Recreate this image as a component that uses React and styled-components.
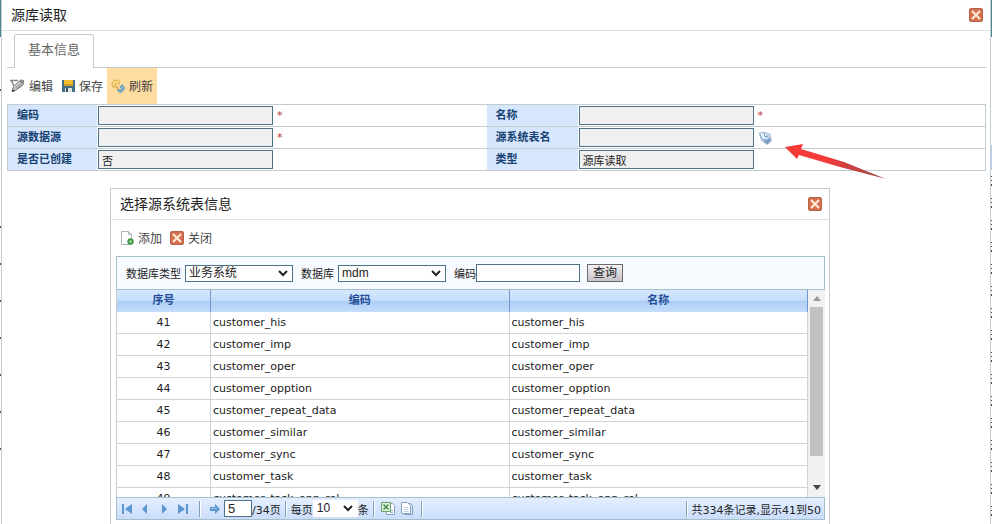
import React from 'react'
import styled, { createGlobalStyle } from 'styled-components'

const FONT = "'DejaVu Sans', 'Noto Sans CJK SC', sans-serif"
const CONTROL_FONT = "'Liberation Sans', 'Noto Sans CJK SC', sans-serif"
const BORDER = '#c3cdd1'
const PANEL_BORDER = '#a3bfca'
const INPUT_BORDER = '#4d7386'

const GlobalStyle = createGlobalStyle`
  * {
    box-sizing: border-box;
  }

  body {
    margin: 0;
    overflow: hidden;
    background: #fff;
    color: #222;
    font-family: ${FONT};
    font-size: 11px;
  }

  button, input, select {
    margin: 0;
    border-radius: 0;
    color: inherit;
    font-family: ${CONTROL_FONT};
  }
`

const Page = styled('div')`
  display: flex;
  min-height: 100vh;
  background: #fff;
`

const LeftEdge = styled('div')`
  width: 1px;
  background:
    linear-gradient(#4c8294, #4c8294) 0 0 / 1px 37px no-repeat,
    linear-gradient(#555, #555) 0 89px / 1px 2px no-repeat,
    linear-gradient(#fff, #fff) 0 0 / 1px 220px no-repeat,
    linear-gradient(#fff, #fff) 0 460px / 1px 100% no-repeat,
    repeating-linear-gradient(#fff 0, #fff 4px, #555 4px, #555 6px, #fff 6px, #fff 37px);
`

const RightEdge = styled('div')`
  width: 1px;
  background:
    linear-gradient(#4c8294, #4c8294) 0 0 / 1px 37px no-repeat,
    linear-gradient(#fff, #fff) 0 37px / 1px 108px no-repeat,
    linear-gradient(#b5cdf0, #b5cdf0) 0 145px / 1px 25px no-repeat,
    repeating-linear-gradient(#444 0, #444 1px, #fff 1px, #fff 4px, #444 4px, #444 5px, #fff 5px, #fff 8px, #444 8px, #444 10px, #fff 10px, #fff 22px);
`

const Window = styled('main')`
  display: flex;
  flex: 1;
  flex-direction: column;
  min-width: 0;
  border: 0 solid ${BORDER};
  border-width: 0 1px;
`

const TitleBar = styled('header')`
  display: flex;
  align-items: center;
  justify-content: space-between;
  height: 31px;
  padding: 0 7px 0 9px;
  border-bottom: 1px solid #dbe3e6;
`

const Title = styled('h1')`
  margin: 0;
  font-size: 14px;
  font-weight: 400;
  line-height: 20px;
`

const IconButton = styled('button')`
  display: flex;
  padding: 0;
  border: 0;
  background: none;
`

const Tabs = styled('div')`
  display: flex;
  height: 37px;
  margin: 0 4px 0 5px;
  padding: 3px 7px 0;
  border-bottom: 1px solid ${BORDER};
`

const Tab = styled('button')`
  height: 34px;
  padding: 0 13px 6px;
  border: 1px solid ${BORDER};
  border-bottom: 0;
  border-radius: 3px 3px 0 0;
  background: #fff;
  color: #666;
  font-size: 13px;
`

const Toolbar = styled('div')`
  display: flex;
  height: 36px;
  padding-left: ${({ $inset }) => $inset}px;
`

const ToolButton = styled('button')`
  display: flex;
  align-items: center;
  gap: 4px;
  padding: 0 4px 1px;
  border: 0;
  background: ${({ $active }) => ($active ? '#ffdc9f' : 'none')};
  color: #444;
  font-size: 12px;
`

const Form = styled('form')`
  display: grid;
  grid-template-columns: 89px 390fr 91px 408fr;
  margin: 0 4px 0 5px;
  border: 1px solid ${BORDER};
  border-bottom: 0;
`

const FieldLabel = styled('label')`
  height: 22px;
  padding-left: 9px;
  border-bottom: 1px solid ${BORDER};
  background: #d6e6fd;
  color: #164272;
  font-weight: 700;
  line-height: 22px;
`

const FieldCell = styled('div')`
  position: relative;
  display: flex;
  align-items: center;
  gap: 4px;
  height: 22px;
  padding-left: 1px;
  border-bottom: 1px solid ${BORDER};
`

const FieldInput = styled('input')`
  width: 175px;
  height: 19px;
  padding: 0 3px;
  border: 1px solid ${INPUT_BORDER};
  background: #f0f0f0;
  font-size: 11px;
`

const Required = styled('span')`
  color: #b8373c;
`

const Arrow = styled('svg')`
  position: absolute;
  top: 15px;
  left: 206px;
  z-index: 1;
`

const Dialog = styled('section')`
  flex: 1;
  width: 720px;
  margin: 17px 0 0 108px;
  border: 1px solid ${BORDER};
  border-bottom: 0;
`

const DialogBody = styled('div')`
  padding: 0 4px 4px 5px;
`

const Filters = styled('form')`
  display: flex;
  align-items: center;
  height: 34px;
  padding-left: 9px;
  border: 1px solid ${PANEL_BORDER};
  background: #f7fbff;
`

const Filter = styled('label')`
  display: flex;
  align-items: center;
  gap: ${({ $gap }) => $gap}px;
  margin-right: ${({ $after }) => $after}px;
`

const SelectBox = styled('span')`
  display: flex;
  align-items: center;
  width: ${({ $width }) => $width}px;
  height: 17px;
  border: 1px solid ${({ $plain }) => ($plain ? '#fff' : INPUT_BORDER)};
  background: #fff;

  & > select {
    flex: 1;
    min-width: 0;
    height: 15px;
    padding: 0 3px;
    appearance: none;
    border: 0;
    background: none;
    font-size: 12px;
    line-height: 15px;
  }

  & > svg {
    margin-right: 4px;
  }
`

const FilterInput = styled('input')`
  width: 104px;
  height: 18px;
  border: 1px solid ${INPUT_BORDER};
  background: #fff;
`

const QueryButton = styled('button')`
  width: 36px;
  height: 18px;
  padding: 0;
  border: 1px solid #6b6b6b;
  background: linear-gradient(#f4f2f4, #c6c2c8);
  color: #222;
  font-size: 12px;
  line-height: 16px;
`

const GridArea = styled('div')`
  display: flex;
  height: 207px;
  overflow: hidden;
  border-left: 1px solid ${BORDER};
`

const GridViewport = styled('div')`
  flex: 1;
  overflow: hidden;
`

const Grid = styled('table')`
  width: 100%;
  border-spacing: 0;
  table-layout: fixed;
`

const HeadCell = styled('th')`
  width: ${({ $width }) => $width};
  height: 22px;
  padding: 0;
  border-right: 1px solid #7096cf;
  background: linear-gradient(#d6e8fd 0, #c3dbfa 50%, #adcdf6 50%, #c5dcfb 100%);
  color: #1f4e96;
  line-height: 22px;
`

const Cell = styled('td')`
  height: 22px;
  padding: 0 2px;
  border: 0 solid #d3d3d3;
  border-width: 0 1px 1px 0;
  line-height: 21px;
  text-align: ${({ $align }) => $align || 'left'};
`

const Scrollbar = styled('div')`
  display: flex;
  flex-direction: column;
  align-items: center;
  justify-content: space-between;
  width: 17px;
  padding: 6px 0 7px;
  background: #f1f1f1;
`

const ScrollThumb = styled('div')`
  width: 13px;
  height: 149px;
  margin-bottom: 24px;
  background: #c1c1c1;
`

const Pager = styled('footer')`
  display: flex;
  align-items: center;
  height: 23px;
  padding: 0 3px 0 4px;
  border: 1px solid ${PANEL_BORDER};
  background: linear-gradient(#e3eeff, #cbddfb);
`

const PagerButton = styled('button')`
  display: flex;
  align-items: center;
  justify-content: center;
  width: ${({ $width }) => $width || 19}px;
  height: 20px;
  padding: 0;
  border: 0;
  background: none;
`

const Separator = styled('span')`
  width: 2px;
  height: 16px;
  margin: 0 4px;
  border-left: 1px solid #7e9fb8;
  background: #fff;
`

const PageInput = styled('input')`
  width: 28px;
  height: 17px;
  padding: 0 3px;
  border: 1px solid ${INPUT_BORDER};
  background: #fff;
  font-size: 13px;
`

const Summary = styled('span')`
  display: flex;
  align-items: center;
  margin-left: auto;
  white-space: nowrap;
`

const CloseIcon = () => (
  <svg width="14" height="14" viewBox="0 0 14 14">
    <rect x="0.5" y="0.5" width="13" height="13" rx="1.5" fill="#d5704f" stroke="#b96248" />
    <path d="M3 3l8 8M11 3l-8 8" stroke="#ffe9d6" strokeWidth="2.2" />
  </svg>
)

const EditIcon = () => (
  <svg width="15" height="14" viewBox="0 0 15 14">
    <path d="M0 1.500h8M1.500 2l2.500 5" stroke="#8a8a8a" strokeWidth="1.500" fill="none" />
    <path d="M2 12.500l1.500-5 7-6.500 3 .5-.5 4.500-7 5z" fill="#d4d4d4" stroke="#777" />
    <path d="M10.500 1l3 .5-.5 4.500-4-3.500z" fill="#8a8a8a" />
    <path d="M2 13l.8-3 2.200 2z" fill="#333" />
    <path d="M5 9.500l5-5M6.500 10.500l5-5" stroke="#666" strokeWidth="0.800" />
  </svg>
)

const SaveIcon = () => (
  <svg width="14" height="14" viewBox="0 0 14 14">
    <rect x="1" y="1" width="13" height="12" fill="#426f88" />
    <rect x="3" y="1" width="9" height="6" fill="#f0bd35" />
    <rect x="3" y="5" width="9" height="2" fill="#d59c24" />
    <rect x="4" y="9" width="7" height="4" fill="#dce4e7" />
    <rect x="5" y="9" width="2" height="4" fill="#41545c" />
  </svg>
)

const RefreshIcon = () => (
  <svg width="14" height="14" viewBox="0 0 14 14">
    <path d="M2 8.500L.8 5 3 1.500 7.500 1 9 4 7 5.500 5.500 4 4 5l.5 2.500z" fill="#ffd97c" stroke="#cf9f4f" strokeWidth="0.800" />
    <path d="M4 7l3.500 2.500" stroke="#d8a03a" strokeWidth="1.500" />
    <path d="M11.500 5.500L13.500 9l-1 2.500L9.500 14 6 11l2-.5 1.500 1 .8-2L9 7.500z" fill="#82b5cb" stroke="#5d93a9" strokeWidth="0.800" />
  </svg>
)

const LookupIcon = () => (
  <svg width="14" height="14" viewBox="0 0 14 14">
    <path d="M1 2l5-1 6 2 1.500 7-4 3.500-6-4z" fill="#c6d8ee" stroke="#a9bdd4" strokeWidth="0.800" />
    <path d="M1.500 3l2 5 4 1 .5-6z" fill="#f0f7fd" />
    <path d="M2 3.500l2.500 5 4 .5M6 2l1 4 3-1" fill="none" stroke="#6b97c2" />
    <path d="M5 10l4 3.500 4-3.500-1-4-3 3z" fill="#7d9fc4" />
  </svg>
)

const AddIcon = () => (
  <svg width="14" height="14" viewBox="0 0 14 14">
    <path d="M1.500 0.500h7l3 3v10h-10z" fill="#fff" stroke="#a9b8b4" />
    <path d="M8.500 0.500v3h3" fill="none" stroke="#a9b8b4" />
    <circle cx="10.500" cy="10.500" r="3.200" fill="#43974b" />
    <path d="M9 10.500h3M10.500 9v3" stroke="#a5dba0" />
  </svg>
)

const Chevron = () => (
  <svg width="10" height="7" viewBox="0 0 10 7">
    <path d="M1 1l4 4 4-4" fill="none" stroke="#222" strokeWidth="2" />
  </svg>
)

const PagerIcon = ({ type }) => {
  const back = type === 'first' || type === 'prev'
  const edge = type === 'first' || type === 'last'
  return (
    <svg width="12" height="12" viewBox="0 0 12 12">
      <g fill="#5b96cf" transform={back ? 'translate(12 0) scale(-1 1)' : undefined}>
        {edge ? <path d="M1 1l7 5-7 5zM9 1h2v10H9z" /> : <path d="M4 1l5 5-5 5z" />}
      </g>
    </svg>
  )
}

const GoIcon = () => (
  <svg width="12" height="12" viewBox="0 0 12 12">
    <path d="M1 4h5V1l5 5-5 5V8H1z" fill="#5b96cf" />
    <path d="M2 5.500h6" stroke="#9cc5ee" />
  </svg>
)

const ExcelIcon = () => (
  <svg width="15" height="15" viewBox="0 0 15 15">
    <path d="M5.500 2.500h6l2 2v9h-8z" fill="#fff" stroke="#86a2c3" />
    <path d="M9 9.500h3M9 11.500h3" stroke="#a3b8cd" />
    <rect x="0.500" y="1.500" width="9" height="9" fill="#e3f2dc" stroke="#6ba36b" />
    <path d="M2.500 3.500l5 5M7.500 3.500l-5 5" stroke="#4b9150" strokeWidth="1.600" />
  </svg>
)

const DocIcon = () => (
  <svg width="14" height="15" viewBox="0 0 14 15">
    <path d="M4.500 2.500h6l2 2v9h-8z" fill="#d7e4f5" stroke="#86a2c3" />
    <path d="M1.500 1.500h6l3 3v8h-9z" fill="#fff" stroke="#86a2c3" />
    <path d="M3.500 6.500h5M3.500 8.500h5M3.500 10.500h5" stroke="#c3d3e5" />
  </svg>
)

const FIELDS = [
  { id: 'code', label: '编码', value: '', required: true },
  { id: 'name', label: '名称', value: '', required: true },
  { id: 'source', label: '源数据源', value: '', required: true },
  { id: 'sourceTable', label: '源系统表名', value: '', lookup: true },
  { id: 'created', label: '是否已创建', value: '否' },
  { id: 'type', label: '类型', value: '源库读取' },
]

const ROWS = [
  [41, 'customer_his'],
  [42, 'customer_imp'],
  [43, 'customer_oper'],
  [44, 'customer_opption'],
  [45, 'customer_repeat_data'],
  [46, 'customer_similar'],
  [47, 'customer_sync'],
  [48, 'customer_task'],
  [49, 'customer_task_opp_rel'],
]

const Select = ({ value, width, plain, label }) => (
  <SelectBox $width={width} $plain={plain}>
    <select defaultValue={value} aria-label={label}>
      <option>{value}</option>
    </select>
    <Chevron />
  </SelectBox>
)

const SourceForm = () => (
  <Form>
    {FIELDS.map(({ id, label, value, required, lookup }) => (
      <React.Fragment key={id}>
        <FieldLabel htmlFor={id}>{label}</FieldLabel>
        <FieldCell>
          <FieldInput id={id} defaultValue={value} readOnly />
          {required && <Required>*</Required>}
          {lookup && (
            <>
              <IconButton type="button" aria-label="选择"><LookupIcon /></IconButton>
              <Arrow width="104" height="38" viewBox="0 0 104 38">
                <defs>
                  <linearGradient id="arrowFill">
                    <stop offset="0.4" stopColor="#f53a3a" />
                    <stop offset="1" stopColor="#8f4a4a" />
                  </linearGradient>
                </defs>
                <path d="M1 5l18-3-2 5 43 13 42 17-46-12-41-12-2 4z" fill="url(#arrowFill)" />
              </Arrow>
            </>
          )}
        </FieldCell>
      </React.Fragment>
    ))}
  </Form>
)

const TableGrid = () => (
  <GridArea>
    <GridViewport>
      <Grid>
        <thead>
          <tr>
            <HeadCell $width="94px">序号</HeadCell>
            <HeadCell>编码</HeadCell>
            <HeadCell>名称</HeadCell>
          </tr>
        </thead>
        <tbody>
          {ROWS.map(([index, name]) => (
            <tr key={index}>
              <Cell $align="center">{index}</Cell>
              <Cell>{name}</Cell>
              <Cell>{name}</Cell>
            </tr>
          ))}
        </tbody>
      </Grid>
    </GridViewport>
    <Scrollbar>
      <svg width="8" height="5"><path d="M0 5l4-5 4 5z" fill="#999" /></svg>
      <ScrollThumb />
      <svg width="8" height="5"><path d="M0 0l4 5 4-5z" fill="#444" /></svg>
    </Scrollbar>
  </GridArea>
)

const TablePager = () => (
  <Pager>
    <PagerButton aria-label="首页" $width={12}><PagerIcon type="first" /></PagerButton>
    <PagerButton aria-label="上一页" $width={24}><PagerIcon type="prev" /></PagerButton>
    <PagerButton aria-label="下一页" $width={14}><PagerIcon type="next" /></PagerButton>
    <PagerButton aria-label="末页" $width={24}><PagerIcon type="last" /></PagerButton>
    <Separator />
    <PagerButton aria-label="跳转"><GoIcon /></PagerButton>
    <PageInput aria-label="页码" defaultValue="5" />
    <span>/34页</span>
    <Separator />
    <span>每页</span>
    <Select label="每页条数" value="10" width={45} plain />
    <span>条</span>
    <Separator />
    <PagerButton aria-label="导出Excel"><ExcelIcon /></PagerButton>
    <PagerButton aria-label="导出文本"><DocIcon /></PagerButton>
    <Separator />
    <Summary>
      <Separator />
      共334条记录,显示41到50
    </Summary>
  </Pager>
)

const App = () => {
  return (
    <Page>
      <GlobalStyle />
      <LeftEdge />
      <Window>
        <TitleBar>
          <Title>源库读取</Title>
          <IconButton aria-label="关闭"><CloseIcon /></IconButton>
        </TitleBar>
        <Tabs>
          <Tab>基本信息</Tab>
        </Tabs>
        <Toolbar $inset={4}>
          <ToolButton><EditIcon />编辑</ToolButton>
          <ToolButton><SaveIcon />保存</ToolButton>
          <ToolButton $active><RefreshIcon />刷新</ToolButton>
        </Toolbar>
        <SourceForm />
        <Dialog>
          <TitleBar>
            <Title as="h2">选择源系统表信息</Title>
            <IconButton aria-label="关闭"><CloseIcon /></IconButton>
          </TitleBar>
          <Toolbar $inset={5}>
            <ToolButton><AddIcon />添加</ToolButton>
            <ToolButton><CloseIcon />关闭</ToolButton>
          </Toolbar>
          <DialogBody>
            <Filters>
              <Filter $gap={4} $after={8}>
                数据库类型
                <Select value="业务系统" width={108} />
              </Filter>
              <Filter $gap={4} $after={8}>
                数据库
                <Select value="mdm" width={108} />
              </Filter>
              <Filter $gap={0} $after={7}>
                编码
                <FilterInput />
              </Filter>
              <QueryButton type="button">查询</QueryButton>
            </Filters>
            <TableGrid />
            <TablePager />
          </DialogBody>
        </Dialog>
      </Window>
      <RightEdge />
    </Page>
  )
}

export default App
